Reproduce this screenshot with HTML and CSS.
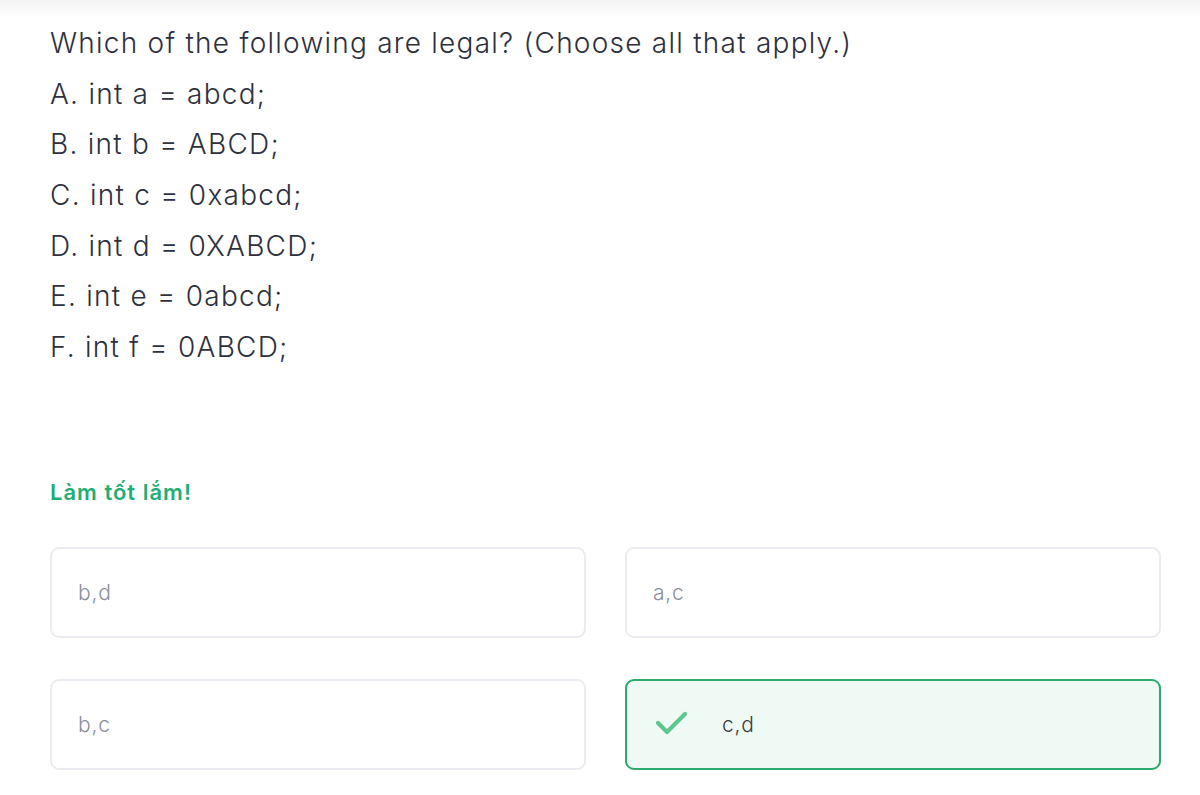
FILE: index.html
```html
<!DOCTYPE html>
<html lang="vi">
<head>
<meta charset="utf-8">
<link rel="stylesheet" href="styles.css">
</head>
<body>
<div class="topshade"></div>
<main class="page">
  <section class="question">
    <p class="q-line">Which of the following are legal? (Choose all that apply.)</p>
    <p class="q-line">A. int a = abcd;</p>
    <p class="q-line">B. int b = ABCD;</p>
    <p class="q-line">C. int c = 0xabcd;</p>
    <p class="q-line">D. int d = 0XABCD;</p>
    <p class="q-line">E. int e = 0abcd;</p>
    <p class="q-line">F. int f = 0ABCD;</p>
  </section>
  <p class="feedback">Làm tốt lắm!</p>
  <section class="answers">
    <div class="answer"><span class="answer-text">b,d</span></div>
    <div class="answer"><span class="answer-text">a,c</span></div>
    <div class="answer"><span class="answer-text">b,c</span></div>
    <div class="answer answer-correct">
      <svg class="check" width="34" height="26" viewBox="0 0 34 26"><path d="M3 13 L12 22 L30 4" fill="none" stroke="#5cc890" stroke-width="4.2" stroke-linecap="round" stroke-linejoin="round"/></svg>
      <span class="answer-text">c,d</span>
    </div>
  </section>
</main>
</body>
</html>
```
FILE: styles.css
```css
* { box-sizing: border-box; }
html, body { margin: 0; padding: 0; background: #fff; }
body {
  font-family: "Inter", "Liberation Sans", sans-serif;
  color: #2e313d;
  width: 1200px;
  height: 795px;
  overflow: hidden;
  position: relative;
}
.topshade {
  position: absolute;
  top: 0; left: 0; right: 0;
  height: 18px;
  background: linear-gradient(#f4f4f4, #ffffff);
}
.page {
  position: relative;
  padding: 18px 39px 0 50px;
}
.question { margin: 0; }
.q-line {
  margin: 0;
  font-size: 28px;
  line-height: 50.67px;
  font-weight: 300;
  letter-spacing: 1.25px;
  color: #2e313d;
}
.feedback {
  margin: 106px 0 0 0;
  font-size: 22px;
  line-height: 26px;
  font-weight: 600;
  letter-spacing: 1px;
  color: #1fae75;
}
.answers {
  margin-top: 42px;
  display: grid;
  grid-template-columns: 1fr 1fr;
  column-gap: 39px;
  row-gap: 41px;
}
.answer {
  height: 91px;
  border: 2px solid #ebebf1;
  border-radius: 9px;
  display: flex;
  align-items: center;
  padding-left: 26px;
  background: #fff;
}
.answer-text {
  font-size: 21px;
  font-weight: 300;
  letter-spacing: 0.8px;
  color: #8c8f9b;
}
.answer-correct {
  border: 2.5px solid #2aaa6c;
  background: #f0faf4;
  padding-left: 28px;
  gap: 33px;
}
.answer-correct .answer-text { color: #3a3d49; }
.check { display: block; margin-top: -2px; }
```
